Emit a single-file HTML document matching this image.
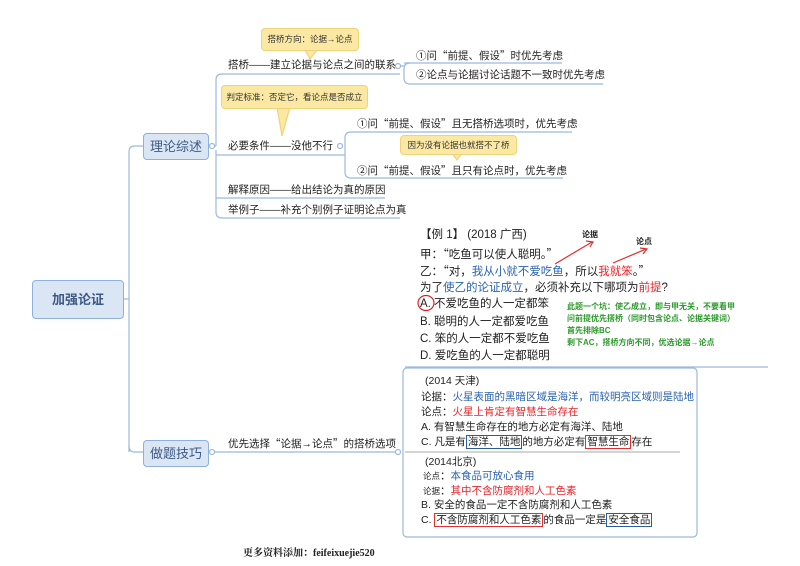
<!DOCTYPE html>
<html><head><meta charset="utf-8"><style>
body{margin:0;width:800px;height:566px;background:#fff;position:relative;overflow:hidden;font-family:"Liberation Sans","Noto Sans CJK SC",sans-serif;color:#222}
.t{position:absolute;white-space:nowrap;font-size:10.5px;line-height:13px}
.q{font-family:"Noto Sans CJK SC",sans-serif}
.box{position:absolute;background:#dbe6f4;border:1px solid #8eb0dc;border-radius:4px;color:#3d5a85;text-align:center;font-size:13px}
.call{position:absolute;background:#fbe8a3;border:1px solid #f0d27a;border-radius:4px;font-size:8.5px;text-align:center;color:#333}
.ex{position:absolute;white-space:nowrap;font-size:11.5px;line-height:15px;color:#222}
.s{font-size:10.5px;line-height:13px;position:absolute;white-space:nowrap}
.bl{color:#2a63b5}.rd{color:#e8232a}
.g{position:absolute;white-space:nowrap;font-size:8px;line-height:12px;color:#2a9a2a;font-weight:bold}
.rb{border:1.5px solid #e03030;padding:0 1px}.bb{border:1.5px solid #2b5c9a;padding:0 1px}
</style></head><body>
<svg width="800" height="566" style="position:absolute;left:0;top:0" fill="none" stroke="#9cb8e0" stroke-width="1.2">
<path d="M123 299H129"/>
<path d="M129 452V152Q129 146 135 146H143"/>
<path d="M129 446Q129 452 135 452H143"/>
<path d="M208 146H216"/><path d="M208 452H400"/>
<path d="M216 146V80Q216 74 222 74H400"/>
<path d="M216 155H345"/>
<path d="M216 150V212Q216 218 222 218H400"/>
<path d="M216 198H385"/>
<path d="M404 63H562"/>
<path d="M400 66H404M410 63Q404 63 404 69V78Q404 84 410 84H603"/>
<path d="M345 146V138Q345 132 351 132H572"/>
<path d="M345 146V172Q345 178 351 178H563"/>
<path d="M405 367H768"/>
<path d="M405 452H680" stroke="#bbb"/>
<rect x="403" y="368" width="294" height="169" rx="4"/>
<circle cx="212" cy="146" r="2.5" fill="#fff"/><circle cx="212" cy="452" r="2.5" fill="#fff"/>
<circle cx="398" cy="66" r="2.5" fill="#fff"/><circle cx="340" cy="146" r="2.5" fill="#fff"/>
<circle cx="398" cy="452" r="2.5" fill="#fff"/>
<g stroke="#e82a2a" stroke-width="1.2"><path d="M555 264L592 242M586 241L593 242L590 247"/><path d="M613 263L646 249M640 248L647 249L643 254"/></g>
<ellipse cx="426" cy="303" rx="8" ry="7.5" stroke="#e02020"/>
<path d="M305 50L310 59L317 50" fill="#fbe8a3" stroke="#f0d27a"/>
<path d="M277 107L282 136L290 107" fill="#fbe8a3" stroke="#f0d27a"/>
<path d="M452 153L457 160L462 153" fill="#fbe8a3" stroke="#f0d27a"/>
</svg>
<div class="box" style="left:32px;top:280px;width:90px;height:37px;line-height:37px;font-weight:bold;font-size:13px">加强论证</div>
<div class="box" style="left:143px;top:133px;width:64px;height:25px;line-height:25px">理论综述</div>
<div class="box" style="left:143px;top:440px;width:64px;height:25px;line-height:25px">做题技巧</div>
<div class="call" style="left:261px;top:28px;width:96px;height:21px;line-height:21px">搭桥方向：论据→论点</div>
<div class="call" style="left:221px;top:85px;width:145px;height:22px;line-height:22px">判定标准：否定它，看论点是否成立</div>
<div class="call" style="left:400px;top:135px;width:115px;height:18px;line-height:18px">因为没有论据也就搭不了桥</div>
<div class="t" style="left:228px;top:59px">搭桥——建立论据与论点之间的联系</div>
<div class="t" style="left:228px;top:140px">必要条件——没他不行</div>
<div class="t" style="left:228px;top:184px">解释原因——给出结论为真的原因</div>
<div class="t" style="left:228px;top:204px">举例子——补充个别例子证明论点为真</div>
<div class="t" style="left:416px;top:49px">①问<span class="q">“</span>前提、假设<span class="q">”</span>时优先考虑</div>
<div class="t" style="left:416px;top:69px">②论点与论据讨论话题不一致时优先考虑</div>
<div class="t" style="left:357px;top:117px">①问<span class="q">“</span>前提、假设<span class="q">”</span>且无搭桥选项时，优先考虑</div>
<div class="t" style="left:357px;top:164px">②问<span class="q">“</span>前提、假设<span class="q">”</span>且只有论点时，优先考虑</div>
<div class="t" style="left:228px;top:437px">优先选择<span class="q">“</span>论据→论点<span class="q">”</span>的搭桥选项</div>
<div class="ex" style="left:420px;top:228px">【例 1】 (2018 广西)</div>
<div class="ex" style="left:420px;top:247px">甲：<span class="q">“</span>吃鱼可以使人聪明。<span class="q">”</span></div>
<div class="ex" style="left:420px;top:264px">乙：<span class="q">“</span>对，<span class="bl">我从小就不爱吃鱼</span>，所以<span class="rd">我就笨</span>。<span class="q">”</span></div>
<div class="ex" style="left:420px;top:281px">为了<span class="bl">使乙的论证成立</span>，必须补充以下哪项为<span class="rd">前提</span>?</div>
<div class="ex" style="left:420px;top:297px">A. 不爱吃鱼的人一定都笨</div>
<div class="ex" style="left:420px;top:315px">B. 聪明的人一定都爱吃鱼</div>
<div class="ex" style="left:420px;top:332px">C. 笨的人一定都不爱吃鱼</div>
<div class="ex" style="left:420px;top:349px">D. 爱吃鱼的人一定都聪明</div>
<div class="t" style="left:582px;top:228px;font-size:8px;font-weight:bold">论据</div>
<div class="t" style="left:636px;top:235px;font-size:8px;font-weight:bold">论点</div>
<div class="g" style="left:567px;top:301px">此题一个坑：使乙成立，即与甲无关，不要看甲</div>
<div class="g" style="left:567px;top:313px">问前提优先搭桥（同时包含论点、论据关键词）</div>
<div class="g" style="left:567px;top:325px">首先排除BC</div>
<div class="g" style="left:567px;top:337px">剩下AC，搭桥方向不同，优选论据→论点</div>
<div class="s" style="left:425px;top:375px">(2014 天津)</div>
<div class="s" style="left:421px;top:391px">论据：<span class="bl">火星表面的黑暗区域是海洋，而较明亮区域则是陆地</span></div>
<div class="s" style="left:421px;top:406px">论点：<span class="rd">火星上肯定有智慧生命存在</span></div>
<div class="s" style="left:421px;top:421px">A. 有智慧生命存在的地方必定有海洋、陆地</div>
<div class="s" style="left:421px;top:436px">C. 凡是有<span class="bb">海洋、陆地</span>的地方必定有<span class="rb">智慧生命</span>存在</div>
<div class="s" style="left:425px;top:456px">(2014北京)</div>
<div class="s" style="left:423px;top:470px"><span style="font-size:8.5px">论点</span>：<span class="bl">本食品可放心食用</span></div>
<div class="s" style="left:423px;top:485px"><span style="font-size:8.5px">论据</span>：<span class="rd">其中不含防腐剂和人工色素</span></div>
<div class="s" style="left:421px;top:499px">B. 安全的食品一定不含防腐剂和人工色素</div>
<div class="s" style="left:421px;top:514px">C. <span class="rb">不含防腐剂和人工色素</span>的食品一定是<span class="bb">安全食品</span></div>
<div class="t" style="left:243px;top:547px;font-family:'Liberation Serif','Noto Serif CJK SC',serif;font-weight:bold;font-size:10px">更多资料添加：feifeixuejie520</div>
</body></html>
